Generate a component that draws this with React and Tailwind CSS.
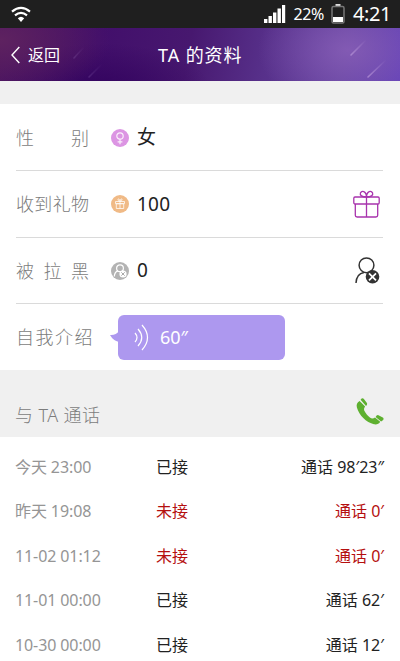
import React from 'react';

function Wifi() {
  return (
    <svg width="20" height="17" viewBox="0 0 20 17" fill="none" stroke="#fff" strokeWidth="2.2">
      <path d="M1 5.6Q10-1.8 19 5.6" />
      <path d="M4 9.3Q10 4.4 16 9.3" />
      <path d="M6.8 12.3Q10 9.3 13.2 12.3L10 16Z" fill="#fff" stroke="none" />
    </svg>
  );
}

function Signal() {
  return (
    <svg width="22" height="18" viewBox="0 0 22 18" fill="#fff">
      <path d="M0 14h3.4v4H0zM4.5 11h3.4v7H4.5zM9 7.5h3.4V18H9zM13.5 3.5h3.4V18h-3.4zM18 0h3.2v18H18z" />
    </svg>
  );
}

function Battery() {
  return (
    <svg width="14" height="20" viewBox="0 0 14 20" fill="none">
      <path d="M4.5 0h5v2h-5z" fill="#ddd" />
      <rect x="1" y="2.5" width="12" height="16.5" rx="1.5" stroke="#777" strokeWidth="1.5" />
      <path d="M2 13h10v5H2z" fill="#fff" />
    </svg>
  );
}

function FemaleBadge() {
  return (
    <svg width="18" height="18" viewBox="0 0 18 18" fill="none">
      <circle cx="9" cy="9" r="9" fill="#dc95e3" />
      <circle cx="9" cy="7" r="3.2" stroke="#fff" strokeOpacity=".85" strokeWidth="1.2" />
      <path d="M9 10.2v5M6.6 12.8h4.8" stroke="#fff" strokeOpacity=".85" strokeWidth="1.2" />
    </svg>
  );
}

function GiftBadge() {
  return (
    <svg width="18" height="18" viewBox="0 0 18 18" fill="none">
      <circle cx="9" cy="9" r="9" fill="#f0ba86" />
      <g stroke="#fff" strokeOpacity=".85" strokeWidth=".9">
        <path d="M4.5 6.5h9v2.2h-9zM5.3 8.7h7.4v4.8H5.3zM9 6.5v7M9 6.3C7 6.3 6.2 4 7.5 4S9 6.3 9 6.3s.2-2.3 1.5-2.3S11 6.3 9 6.3" />
      </g>
    </svg>
  );
}

function BlockedBadge() {
  return (
    <svg width="18" height="18" viewBox="0 0 18 18" fill="none">
      <circle cx="9" cy="9" r="9" fill="#b3b3b3" />
      <circle cx="9" cy="6.2" r="3.4" stroke="#fff" strokeWidth="1.2" />
      <path d="M3.3 14.5c.2-3 1.5-5 3.7-5.6" stroke="#fff" strokeWidth="1.2" />
      <circle cx="12" cy="12" r="3.6" fill="#fff" />
      <path d="M10.3 10.3l3.4 3.4M13.7 10.3l-3.4 3.4" stroke="#aaa" />
    </svg>
  );
}

function Gift() {
  return (
    <svg width="27" height="28" viewBox="0 0 27 28" fill="none" stroke="#a833ad" strokeWidth="1.3">
      <rect x=".8" y="7" width="25.4" height="7" rx="1.2" />
      <path d="M2.3 14v11.2q0 1.8 1.8 1.8h18.8q1.8 0 1.8-1.8V14M13.5 7v20" />
      <path d="M13.5 7C9 7 6.6 5.3 7.4 3.1 8.5.3 13.2.8 13.5 7c.3-6.2 5-6.7 6.1-3.9C20.4 5.3 18 7 13.5 7Z" />
    </svg>
  );
}

function BlockedUser() {
  return (
    <svg width="25" height="27" viewBox="0 0 25 27" fill="none" stroke="#333">
      <circle cx="11.5" cy="8.3" r="7.4" strokeWidth="1.5" />
      <path d="M1 26C1.3 20 4 16.2 9 15.4" strokeWidth="1.5" />
      <circle cx="17.5" cy="19.8" r="6.8" fill="#333" stroke="none" />
      <path d="M14 16.3l7 7M21 16.3l-7 7" stroke="#fff" strokeWidth="1.7" />
    </svg>
  );
}

function Phone() {
  return (
    <svg width="28" height="27" viewBox="0 0 28 27" fill="#5eb030">
      <path d="M3.6 3C1 4.6.2 6.8.9 9.6c2 7.6 9.3 15.1 17.1 16.7 2.7.5 5-.4 6.2-2.6l-5.2-4.1c-1.9 1.3-3.5 1.2-5.1-.1-2.4-2-4.1-4.1-5.4-6.5-.8-1.5-.6-3 .6-4.6z" />
      <path d="M4.6 1.8Q6.2-.5 7.9.9l3 4.2q.8 1.5-.9 3zM19.6 18.9q1.2-2.4 2.9-1.7l4.3 2.3q1.3.9.4 2.6l-2.1 1.3z" />
    </svg>
  );
}

function SoundWaves() {
  return (
    <svg width="15" height="27" viewBox="0 0 15 27" fill="none" stroke="#fff" strokeWidth="1.2">
      <path d="M1 9q4 4.5 0 9M4 5q7.5 8.5 0 17M8 1q11 12.5 0 25" />
    </svg>
  );
}

function ProfileRow({ label, badge, value, action }) {
  return (
    <div className="ml-4 mr-[17px] flex h-[66.6px] items-center border-b border-[#dadada] pt-px">
      <div className="flex w-[73px] justify-between text-[18px] font-light text-[#7c7c7c]">
        {label.split('').map((c) => <span key={c}>{c}</span>)}
      </div>
      <div className="ml-[22px]">{badge}</div>
      <div className="ml-2 text-[19px] tracking-[0.2px] text-[#222]">{value}</div>
      <div className="ml-auto mr-[3px]">{action}</div>
    </div>
  );
}

const calls = [
  ['今天 23:00', '已接', '98′23″', false],
  ['昨天 19:08', '未接', '0′', true],
  ['11-02 01:12', '未接', '0′', true],
  ['11-01 00:00', '已接', '62′', false],
  ['10-30 00:00', '已接', '12′', false],
];

export default function App() {
  return (
    <div className="h-[661px] w-[400px] overflow-hidden whitespace-nowrap bg-white font-['Noto_Sans','Noto_Sans_CJK_SC',sans-serif] leading-none">
      <div className="flex h-7 items-center bg-[#1f1f1f] pl-[11px] pr-[9px] text-white">
        <Wifi />
        <div className="ml-auto flex items-center">
          <Signal />
          <span className="ml-2 text-[16px] tracking-[-0.4px]">22%</span>
          <span className="ml-[7px]"><Battery /></span>
          <span className="ml-2 text-[20px] tracking-[-0.4px]">4:21</span>
        </div>
      </div>

      <header className="relative h-[53px] bg-[radial-gradient(ellipse_90px_60px_at_348px_22px,#8a60b8cc_0%,transparent_100%),radial-gradient(ellipse_110px_60px_at_0px_12px,#5e2260_0%,transparent_100%),radial-gradient(ellipse_110px_45px_at_100px_60px,#33045f_0%,transparent_100%),linear-gradient(100deg,#48125f_0%,#420f6b_25%,#47186f_47%,#57308a_66%,#6443a0_85%,#6341b8_100%)] text-white">
        <svg className="absolute inset-0" width="400" height="53" fill="none" strokeLinecap="round">
          <defs>
            <linearGradient id="streak" x1="0" y1="1" x2="1" y2="0">
              <stop stopColor="#b592d6" stopOpacity=".75" />
              <stop offset="1" stopColor="#b592d6" stopOpacity="0" />
            </linearGradient>
          </defs>
          <g strokeWidth="1.6">
            <path d="M351 27L366 12" stroke="url(#streak)" />
            <path d="M368 49L386 32" stroke="url(#streak)" />
            <path d="M74 30L84 19" stroke="url(#streak)" opacity=".25" />
            <path d="M89 49L102 36" stroke="url(#streak)" opacity=".25" />
          </g>
        </svg>
        <div className="relative flex h-full items-center">
          <svg className="ml-[11px]" width="9" height="18" viewBox="0 0 9 18" fill="none" stroke="#fff" strokeWidth="1.4">
            <path d="M8.3 1L1 9l7.3 8" />
          </svg>
          <span className="ml-2 text-[16px]">返回</span>
          <span className="ml-[98px] text-[18px] tracking-[0.9px]">TA 的资料</span>
        </div>
      </header>

      <div className="h-[23px] bg-[#f0f0f0]" />

      <section className="pt-[0.5px]">
        <ProfileRow label="性别" badge={<FemaleBadge />} value="女" />
        <ProfileRow label="收到礼物" badge={<GiftBadge />} value="100" action={<Gift />} />
        <ProfileRow label="被拉黑" badge={<BlockedBadge />} value="0" action={<BlockedUser />} />
        <div className="ml-4 flex h-[66px] items-center">
          <span className="w-[94px] text-[18px] font-light tracking-[1.5px] text-[#7c7c7c]">自我介绍</span>
          <svg className="mr-[-1px] h-[12px] w-[9px]" viewBox="0 0 9 12" fill="#ad98ef">
            <path d="M9 0Q6 4.5 0 4q3 5.5 9 7z" />
          </svg>
          <div className="flex h-[44.5px] w-[167px] items-center rounded-md bg-[#ad98ef] pl-4 text-[18px] text-white">
            <SoundWaves />
            <span className="ml-[11px]">60″</span>
          </div>
        </div>
      </section>

      <div className="flex h-[67px] items-center bg-[#f0f0f0] pl-[15px] pr-4 pt-[23px] text-[18px] font-light tracking-[0.4px] text-[#7c7c7c]">
        <span>与 TA 通话</span>
        <span className="mb-2 ml-auto"><Phone /></span>
      </div>

      <section className="pt-[7px] text-[16px]">
        {calls.map(([time, status, length, missed]) => (
          <div key={time} className={`flex h-[44.5px] items-center pl-[15px] pr-4 ${missed ? 'text-[#b50f0f]' : 'text-[#222]'}`}>
            <span className="w-[141px] tracking-[-0.1px] text-[#959595]">{time}</span>
            <span>{status}</span>
            <span className="ml-auto">通话 {length}</span>
          </div>
        ))}
      </section>
    </div>
  );
}
